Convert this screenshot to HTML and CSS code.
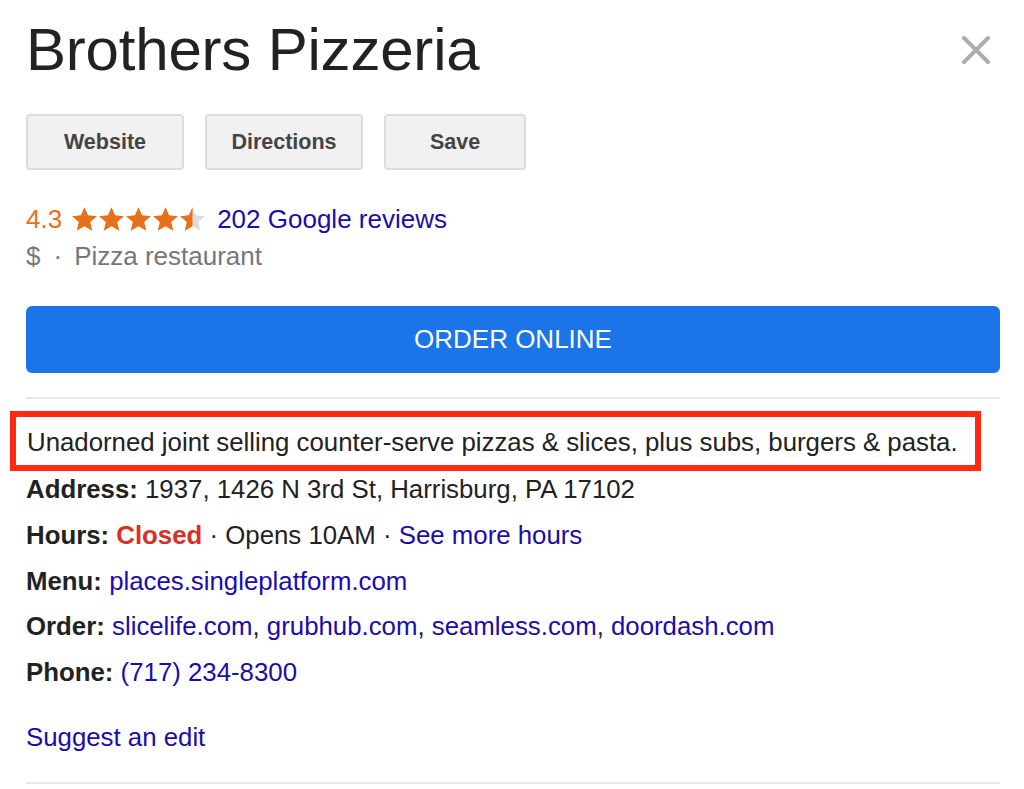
FILE: index.html
```html
<!DOCTYPE html>
<html>
<head>
<meta charset="utf-8">
<link rel="stylesheet" href="styles.css">
</head>
<body>
<div class="panel">
  <header class="head">
    <h1 class="title">Brothers Pizzeria</h1>
    <button class="close" aria-label="Close">
      <svg width="28" height="28" viewBox="0 0 28 28"><path d="M2 2 L26 26 M26 2 L2 26" stroke="#acacac" stroke-width="4" stroke-linecap="square"/></svg>
    </button>
  </header>

  <div class="actions">
    <button class="btn btn-wide">Website</button>
    <button class="btn btn-wide">Directions</button>
    <button class="btn btn-save">Save</button>
  </div>

  <div class="rating">
    <span class="score">4.3</span>
    <span class="stars">
      <svg width="27" height="27" viewBox="0 0 24 24"><path class="on" d="M12 1l3.2 7.3 7.9.7-6 5.2 1.8 7.8L12 17.9 5.1 22l1.8-7.8-6-5.2 7.9-.7z"/></svg>
      <svg width="27" height="27" viewBox="0 0 24 24"><path class="on" d="M12 1l3.2 7.3 7.9.7-6 5.2 1.8 7.8L12 17.9 5.1 22l1.8-7.8-6-5.2 7.9-.7z"/></svg>
      <svg width="27" height="27" viewBox="0 0 24 24"><path class="on" d="M12 1l3.2 7.3 7.9.7-6 5.2 1.8 7.8L12 17.9 5.1 22l1.8-7.8-6-5.2 7.9-.7z"/></svg>
      <svg width="27" height="27" viewBox="0 0 24 24"><path class="on" d="M12 1l3.2 7.3 7.9.7-6 5.2 1.8 7.8L12 17.9 5.1 22l1.8-7.8-6-5.2 7.9-.7z"/></svg>
      <svg width="27" height="27" viewBox="0 0 24 24"><path class="off" d="M12 1l3.2 7.3 7.9.7-6 5.2 1.8 7.8L12 17.9 5.1 22l1.8-7.8-6-5.2 7.9-.7z"/><path class="on" d="M12 1V17.9L5.1 22l1.8-7.8-6-5.2 7.9-.7z"/></svg>
    </span>
    <a class="link" href="#">202 Google reviews</a>
  </div>
  <div class="category">$<span class="dot">·</span>Pizza restaurant</div>

  <button class="order">ORDER ONLINE</button>

  <hr class="rule">

  <p class="desc">Unadorned joint selling counter-serve pizzas &amp; slices, plus subs, burgers &amp; pasta.</p>

  <ul class="facts">
    <li><b>Address:</b> 1937, 1426 N 3rd St, Harrisburg, PA 17102</li>
    <li><b>Hours:</b> <b class="closed">Closed</b> · Opens 10AM · <a class="link" href="#">See more hours</a></li>
    <li><b>Menu:</b> <a class="link" href="#">places.singleplatform.com</a></li>
    <li><b>Order:</b> <a class="link" href="#">slicelife.com</a>, <a class="link" href="#">grubhub.com</a>, <a class="link" href="#">seamless.com</a>, <a class="link" href="#">doordash.com</a></li>
    <li><b>Phone:</b> <a class="link" href="#">(717) 234-8300</a></li>
  </ul>

  <a class="link suggest" href="#">Suggest an edit</a>

  <hr class="rule bottom">
</div>
</body>
</html>
```
FILE: styles.css
```css
* { box-sizing: border-box; }
html, body {
  margin: 0;
  padding: 0;
  background: #fff;
}
body {
  font-family: "Liberation Sans", Arial, sans-serif;
  color: #222;
}
.panel {
  width: 1000px;
  padding: 20px 0 0 26px;
  display: flex;
  flex-direction: column;
  align-items: flex-start;
}
.head {
  width: 974px;
  display: flex;
  justify-content: space-between;
  align-items: flex-start;
}
.title {
  margin: 0;
  font-size: 60px;
  line-height: 60px;
  font-weight: normal;
  color: #222;
  letter-spacing: -0.2px;
}
.close {
  margin: 16px 10px 0 0;
  padding: 0;
  border: 0;
  background: none;
  width: 28px;
  height: 28px;
}
.close svg { display: block; }
.actions {
  margin-top: 34px;
  display: flex;
  gap: 21px;
}
.btn {
  height: 56px;
  border: 2px solid #dcdcdc;
  border-radius: 4px;
  background: #f1f1f1;
  font-family: "Liberation Sans", Arial, sans-serif;
  font-weight: bold;
  font-size: 21.5px;
  color: #444;
  padding: 0;
}
.btn-wide { width: 158px; }
.btn-save { width: 142px; }
.rating {
  margin-top: 34px;
  display: flex;
  align-items: center;
  font-size: 26px;
  line-height: 30px;
}
.score { color: #e7711b; }
.stars {
  display: flex;
  margin: 0 11px 0 9px;
}
.stars svg { display: block; }
.on { fill: #e7711b; }
.off { fill: #dcdcdc; }
.link {
  color: #1a0dab;
  text-decoration: none;
}
.category {
  margin-top: 7px;
  font-size: 26px;
  line-height: 30px;
  color: #777;
}
.dot { margin: 0 12px 0 13px; }
.order {
  margin-top: 35px;
  width: 974px;
  height: 67px;
  border: 0;
  border-radius: 6px;
  background: #1b74e8;
  color: #fff;
  font-family: "Liberation Sans", Arial, sans-serif;
  font-size: 26px;
  padding: 0;
}
.rule {
  margin: 24px 0 0;
  width: 974px;
  border: 0;
  height: 2px;
  background: #e8e8e8;
}
.desc {
  margin: 12px 0 0 -16px;
  width: 971px;
  height: 60px;
  border: 6px solid #ff2a0f;
  padding: 2px 0 0 11px;
  display: flex;
  align-items: center;
  font-size: 25.8px;
  line-height: 30px;
  color: #222;
}
.facts {
  list-style: none;
  margin: -4px 0 0;
  padding: 0;
  font-size: 25.8px;
  line-height: 45.75px;
  color: #222;
}
.facts b { font-weight: bold; color: #222; }
.facts .closed { color: #d93025; }
.suggest {
  margin-top: 18px;
  font-size: 25.8px;
  line-height: 46px;
}
.bottom {
  margin-top: 22px;
}
```
